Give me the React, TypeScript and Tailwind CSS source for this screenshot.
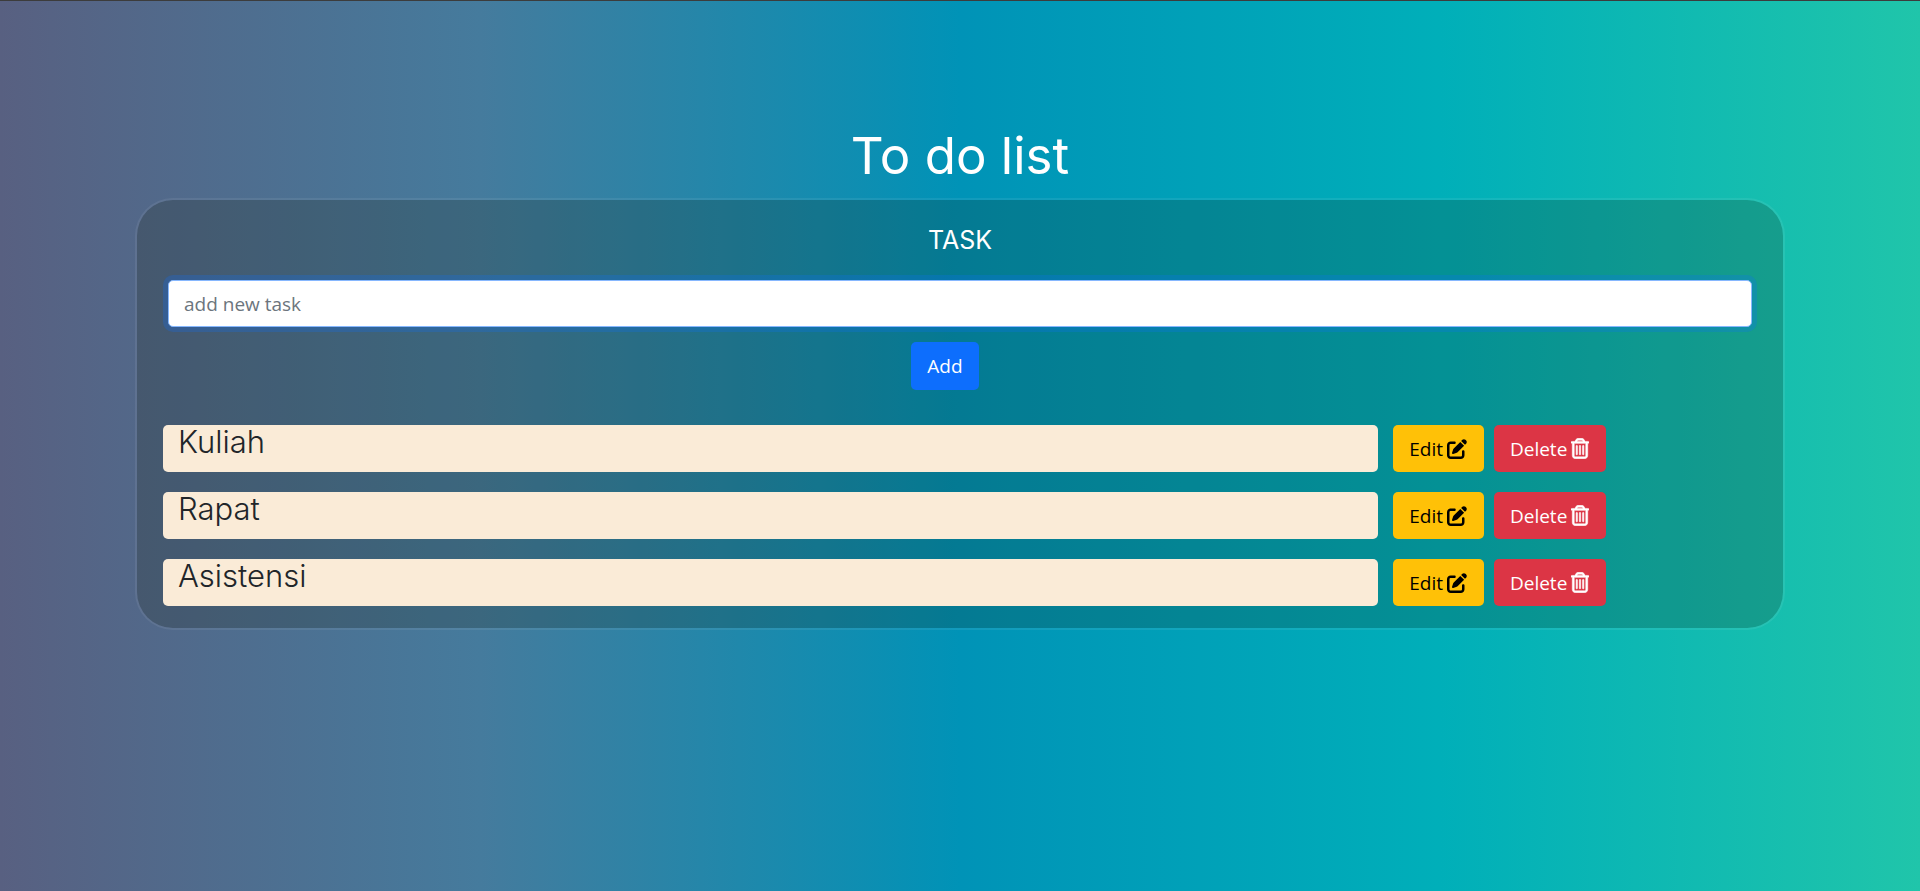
import { useState } from "react";
import { FaPenToSquare, FaRegTrashCan } from "react-icons/fa6";

const initialTasks = ["Kuliah", "Rapat", "Asistensi"];

export default function App() {
  const [tasks, setTasks] = useState(initialTasks);
  const [draft, setDraft] = useState("");

  const addTask = () => {
    if (draft.trim()) {
      setTasks([...tasks, draft.trim()]);
      setDraft("");
    }
  };

  return (
    <main className="min-h-screen border-t border-[#3c3c3c] bg-[linear-gradient(to_right,#586081,#457b9d,#0093b7,#00afb9,#20c5aa)] px-[135px] pt-[121px] font-['Open_Sans',sans-serif] text-[19px] leading-[30px]">
      <h1 className="mb-2 text-center font-['Inter',sans-serif] text-[51px] leading-[68px] text-white">To do list</h1>
      <section className="rounded-[38px] border-2 border-white/7 bg-[#141905]/20 bg-clip-padding px-[26px] pt-[25px] pb-[22px]">
        <div className="flex flex-col px-[5px]">
          <label htmlFor="task" className="mb-[25px] text-center font-['Inter',sans-serif] text-[25px] leading-[30px] text-white">
            TASK
          </label>
          <input
            id="task"
            value={draft}
            onChange={(e) => setDraft(e.target.value)}
            placeholder="add new task"
            className="h-[47px] w-full rounded-[5px] border border-[#86b7fe] bg-white px-[15px] text-[#212529] ring-[5px] ring-[#0d6efd]/25 outline-none placeholder:text-[#6c757d]"
          />
          <button onClick={addTask} className="mt-[15px] mr-[30px] h-12 w-[68px] self-center rounded-[5px] bg-[#0d6efd] text-white">
            Add
          </button>
        </div>
        <ul className="mt-[35px] flex flex-col gap-5">
          {tasks.map((task, i) => (
            <li key={i} className="flex">
              <span className="h-[47px] w-[76.2%] rounded-[5px] bg-[#faebd7] px-[15px] font-['Inter',sans-serif] text-[31px] leading-[34px] font-light text-[#212529]">
                {task}
              </span>
              <button className="ml-[15px] flex h-[47px] w-[91px] items-center justify-center gap-1 rounded-[5px] bg-[#ffc107] text-black">
                Edit <FaPenToSquare className="h-5 w-5" aria-hidden="true" />
              </button>
              <button
                onClick={() => setTasks(tasks.filter((_, j) => j !== i))}
                className="ml-2.5 flex h-[47px] w-28 items-center justify-center gap-1 rounded-[5px] bg-[#dc3545] text-white"
              >
                Delete <FaRegTrashCan className="h-[21px] w-[18px] stroke-current stroke-[14]" aria-hidden="true" />
              </button>
            </li>
          ))}
        </ul>
      </section>
    </main>
  );
}
